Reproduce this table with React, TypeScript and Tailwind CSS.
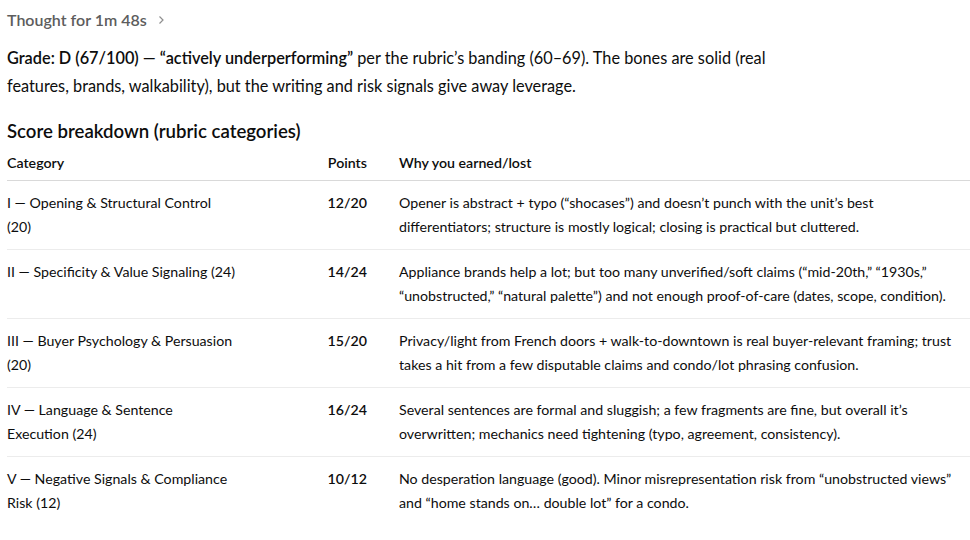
import React from 'react';

const rows = [
  {
    cat: ['I — Opening & Structural Control', '(20)'],
    pts: '12/20',
    why: [
      'Opener is abstract + typo (“shocases”) and doesn’t punch with the unit’s best',
      'differentiators; structure is mostly logical; closing is practical but cluttered.',
    ],
  },
  {
    cat: ['II — Specificity & Value Signaling (24)'],
    pts: '14/24',
    why: [
      'Appliance brands help a lot; but too many unverified/soft claims (“mid-20th,” “1930s,”',
      '“unobstructed,” “natural palette”) and not enough proof-of-care (dates, scope, condition).',
    ],
  },
  {
    cat: ['III — Buyer Psychology & Persuasion', '(20)'],
    pts: '15/20',
    why: [
      'Privacy/light from French doors + walk-to-downtown is real buyer-relevant framing; trust',
      'takes a hit from a few disputable claims and condo/lot phrasing confusion.',
    ],
  },
  {
    cat: ['IV — Language & Sentence', 'Execution (24)'],
    pts: '16/24',
    why: [
      'Several sentences are formal and sluggish; a few fragments are fine, but overall it’s',
      'overwritten; mechanics need tightening (typo, agreement, consistency).',
    ],
  },
  {
    cat: ['V — Negative Signals & Compliance', 'Risk (12)'],
    pts: '10/12',
    why: [
      'No desperation language (good). Minor misrepresentation risk from “unobstructed views”',
      'and “home stands on… double lot” for a condo.',
    ],
  },
];

export default function App() {
  return (
    <div className="w-[970px] h-[540px] overflow-hidden bg-white text-[#0d0d0d] font-['Segoe_UI','Lato',sans-serif]">
      <div className="pl-[7px] pt-[8px]">
        {/* Thought header */}
        <div className="flex items-center gap-[9px] h-[24px] text-[16px] font-semibold text-[#5d5d5d]">
          <span>Thought for 1m 48s</span>
          <svg width="10" height="10" viewBox="0 0 10 10" fill="none" stroke="#8f8f8f" strokeWidth="1.2">
            <path d="M3.5 1.5 L7 5 L3.5 8.5" />
          </svg>
        </div>

        {/* Summary */}
        <p className="mt-[12px] text-[16.3px] leading-[28px] whitespace-nowrap">
          <span className="block">
            <strong className="font-semibold">Grade: D (67/100) — “actively underperforming”</strong> per the
            rubric’s banding (60–69). The bones are solid (real
          </span>
          <span className="block">features, brands, walkability), but the writing and risk signals give away leverage.</span>
        </p>

        <h3 className="mt-[17px] text-[18.6px] leading-[28px] font-semibold">Score breakdown (rubric categories)</h3>

        {/* Table */}
        <table className="mt-[6px] w-[963px] table-fixed border-collapse text-[14.2px] leading-[24px] whitespace-nowrap">
          <colgroup>
            <col className="w-[250px]" />
            <col className="w-[110px]" />
            <col className="w-[32px]" />
            <col />
          </colgroup>
          <thead>
            <tr className="border-b border-[#d9d9d9]">
              <th className="text-left font-semibold pb-[5px]">Category</th>
              <th className="text-right font-semibold pb-[5px]">Points</th>
              <th />
              <th className="text-left font-semibold pb-[5px]">Why you earned/lost</th>
            </tr>
          </thead>
          <tbody>
            {rows.map((r, i) => (
              <tr key={r.pts} className={i < rows.length - 1 ? 'border-b border-[#ececec]' : ''}>
                <td className="align-top py-[10px]">
                  {r.cat.map(l => (
                    <span key={l} className="block">{l}</span>
                  ))}
                </td>
                <td className="align-top py-[10px] text-right font-semibold">{r.pts}</td>
                <td />
                <td className="align-top py-[10px]">
                  {r.why.map(l => (
                    <span key={l} className="block">{l}</span>
                  ))}
                </td>
              </tr>
            ))}
          </tbody>
        </table>
      </div>
    </div>
  );
}
